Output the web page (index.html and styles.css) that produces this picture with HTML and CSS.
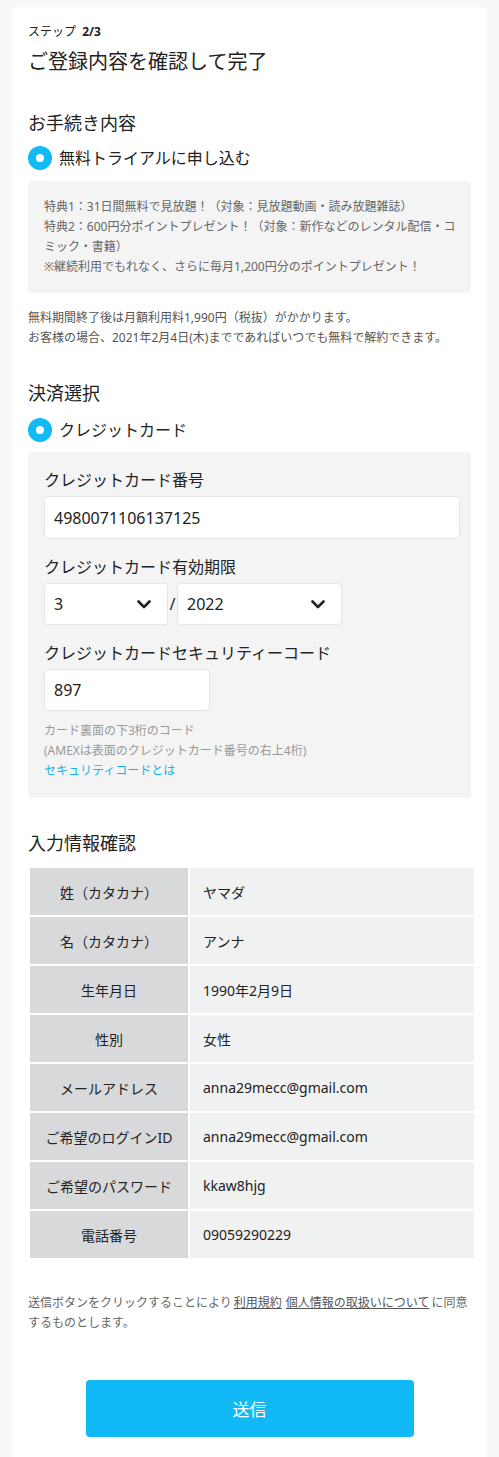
FILE: index.html
```html
<!DOCTYPE html>
<html lang="ja">
<head>
<meta charset="utf-8">
<title>ご登録内容を確認して完了</title>
<link rel="stylesheet" href="styles.css">
</head>
<body>
<main class="card">
  <p class="step">ステップ <b>2/3</b></p>
  <h1 class="title">ご登録内容を確認して完了</h1>

  <section class="sec">
    <h2 class="sec-title">お手続き内容</h2>
    <div class="radio-row"><span class="radio"></span><span>無料トライアルに申し込む</span></div>
    <div class="info-box">
      <p>特典1：31日間無料で見放題！（対象：見放題動画・読み放題雑誌）</p>
      <p>特典2：600円分ポイントプレゼント！（対象：新作などのレンタル配信・コミック・書籍）</p>
      <p>※継続利用でもれなく、さらに毎月1,200円分のポイントプレゼント！</p>
    </div>
    <p class="note">無料期間終了後は月額利用料1,990円（税抜）がかかります。<br>お客様の場合、2021年2月4日(木)までであればいつでも無料で解約できます。</p>
  </section>

  <section class="sec sec-pay">
    <h2 class="sec-title">決済選択</h2>
    <div class="radio-row radio-row-pay"><span class="radio"></span><span>クレジットカード</span></div>
    <div class="pay-box">
      <div class="field">
        <p class="field-label">クレジットカード番号</p>
        <div class="input input-full">4980071106137125</div>
      </div>
      <div class="field">
        <p class="field-label">クレジットカード有効期限</p>
        <div class="expiry">
          <div class="select select-month"><span>3</span>
            <svg class="chev" width="14" height="9" viewBox="0 0 14 9"><polyline points="1.5,1.5 7,7 12.5,1.5" fill="none" stroke="#222" stroke-width="2.6" stroke-linecap="round" stroke-linejoin="round"/></svg>
          </div>
          <span class="slash">/</span>
          <div class="select select-year"><span>2022</span>
            <svg class="chev" width="14" height="9" viewBox="0 0 14 9"><polyline points="1.5,1.5 7,7 12.5,1.5" fill="none" stroke="#222" stroke-width="2.6" stroke-linecap="round" stroke-linejoin="round"/></svg>
          </div>
        </div>
      </div>
      <div class="field">
        <p class="field-label">クレジットカードセキュリティーコード</p>
        <div class="input input-short">897</div>
      </div>
      <p class="hint">カード裏面の下3桁のコード<br>(AMEXは表面のクレジットカード番号の右上4桁)<br><a class="hint-link" href="#">セキュリティコードとは</a></p>
    </div>
  </section>

  <section class="sec sec-confirm">
    <h2 class="sec-title">入力情報確認</h2>
    <table class="info-table">
      <tr><th>姓（カタカナ）</th><td>ヤマダ</td></tr>
      <tr><th>名（カタカナ）</th><td>アンナ</td></tr>
      <tr><th>生年月日</th><td>1990年2月9日</td></tr>
      <tr><th>性別</th><td>女性</td></tr>
      <tr><th>メールアドレス</th><td>anna29mecc@gmail.com</td></tr>
      <tr><th>ご希望のログインID</th><td>anna29mecc@gmail.com</td></tr>
      <tr><th>ご希望のパスワード</th><td>kkaw8hjg</td></tr>
      <tr><th>電話番号</th><td>09059290229</td></tr>
    </table>
  </section>

  <p class="terms">送信ボタンをクリックすることにより<a href="#">利用規約</a><a href="#">個人情報の取扱いについて</a>に同意するものとします。</p>

  <div class="submit-wrap"><button class="submit" type="button">送信</button></div>
</main>
</body>
</html>
```

FILE: styles.css
```css
html, body {
  margin: 0;
  padding: 0;
}
body {
  background: #f7f8fa;
  font-family: "Noto Sans", "Noto Sans CJK JP", sans-serif;
  color: #222;
}
.card {
  margin: 7px 12px 0;
  background: #fff;
  border-radius: 8px 8px 0 0;
  padding: 16px 16px 40px;
}
.step {
  margin: 0;
  font-size: 12px;
  line-height: 18px;
}
.step b {
  font-weight: 700;
  margin-left: 3px;
}
.title {
  margin: 7px 0 0;
  font-size: 20px;
  line-height: 28px;
  font-weight: 400;
}
.sec-title {
  margin: 34px 0 0;
  font-size: 18px;
  line-height: 26px;
  font-weight: 400;
}
.sec-pay .sec-title,
.sec-confirm .sec-title {
  margin-top: 32px;
}
.radio-row {
  display: flex;
  align-items: center;
  gap: 7px;
  margin-top: 10px;
  height: 24px;
  font-size: 16px;
  line-height: 24px;
}
.radio-row-pay {
  margin-top: 12px;
}
.radio {
  width: 24px;
  height: 24px;
  box-sizing: border-box;
  border-radius: 50%;
  border: 8px solid #12b9f5;
  background: #fff;
  flex: none;
}
.info-box {
  margin-top: 11px;
  background: #f4f4f4;
  border-radius: 4px;
  padding: 16px 8px 16px 16px;
  font-size: 12px;
  line-height: 20px;
  color: #666;
}
.info-box p {
  margin: 0;
}
.note {
  margin: 15px 0 0;
  font-size: 12px;
  line-height: 20px;
  color: #555;
}
.pay-box {
  margin-top: 10px;
  background: #f4f4f4;
  border-radius: 4px;
  padding: 16px 16px 17px;
}
.field + .field {
  margin-top: 16px;
}
.field-label {
  margin: 0 0 4px;
  font-size: 16px;
  line-height: 24px;
  color: #222;
}
.input,
.select {
  box-sizing: border-box;
  height: 42px;
  border: 1px solid #e4e4e4;
  border-radius: 4px;
  background: #fff;
  display: flex;
  align-items: center;
  padding: 0 9px;
  font-size: 16px;
  color: #222;
}
.input-full {
  width: 416px;
  height: 43px;
}
.input-short {
  width: 166px;
}
.expiry {
  display: flex;
  align-items: center;
}
.select {
  justify-content: space-between;
  padding-right: 16px;
}
.select-month {
  width: 124px;
}
.select-year {
  width: 165px;
}
.slash {
  width: 9px;
  text-align: center;
  font-size: 16px;
  color: #222;
}
.chev {
  display: block;
}
.hint {
  margin: 10px 0 0;
  font-size: 12px;
  line-height: 20px;
  color: #999;
}
.hint-link {
  color: #12b4f0;
  text-decoration: none;
}
.info-table {
  margin-top: 10px;
  width: 448px;
  border-collapse: separate;
  border-spacing: 2px;
  font-size: 14px;
}
.info-table th,
.info-table td {
  height: 47px;
  padding: 0;
  color: #222;
}
.info-table th {
  width: 158px;
  background: #d8d9da;
  font-weight: 400;
  text-align: center;
}
.info-table td {
  background: #f0f1f1;
  padding-left: 13px;
  text-align: left;
}
.terms {
  margin: 33px 0 0;
  font-size: 12px;
  line-height: 20px;
  color: #666;
}
.terms a {
  color: #555;
  text-decoration: underline;
  margin: 0 2px;
}
.submit-wrap {
  margin-top: 47px;
  display: flex;
  justify-content: center;
}
.submit {
  width: 328px;
  height: 57px;
  border: 0;
  border-radius: 4px;
  background: #10b8f5;
  color: #fff;
  font-family: inherit;
  font-size: 17px;
  cursor: pointer;
}
```
